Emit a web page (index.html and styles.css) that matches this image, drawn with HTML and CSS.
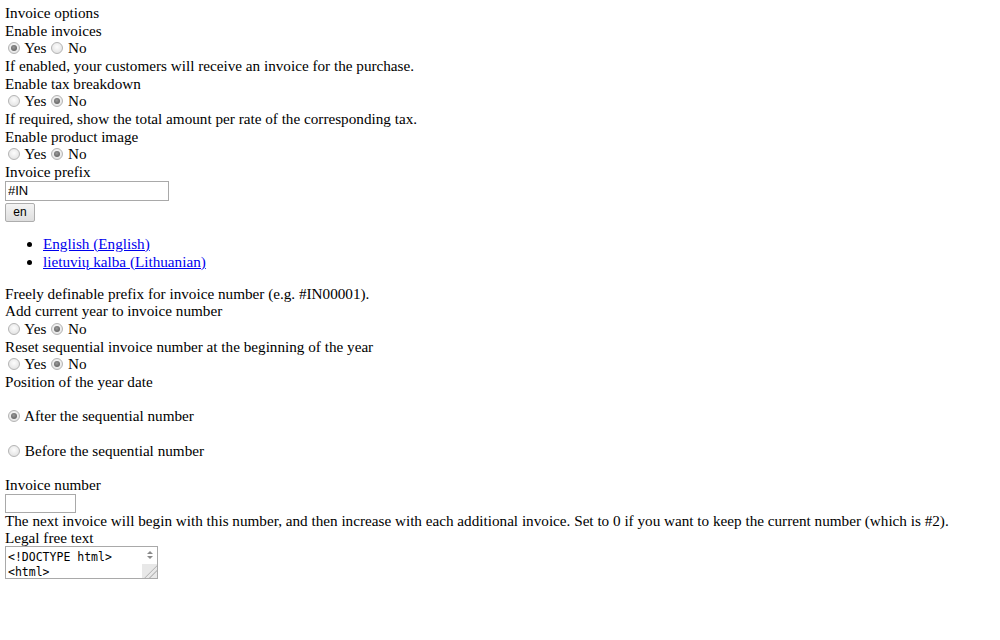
FILE: index.html
```html
<!DOCTYPE html>
<html lang="en">
<head>
    <meta charset="UTF-8">
    <title>Invoice options</title>
    <link rel="stylesheet" href="styles.css">
</head>
<body>
    <div class="settings">
        <div class="line">Invoice options</div>

        <div class="line">Enable invoices</div>
        <div class="choice">
            <label><input type="radio" name="invoices" checked> Yes</label>
            <label><input type="radio" name="invoices"> No</label>
        </div>
        <div class="line">If enabled, your customers will receive an invoice for the purchase.</div>

        <div class="line">Enable tax breakdown</div>
        <div class="choice">
            <label><input type="radio" name="tax"> Yes</label>
            <label><input type="radio" name="tax" checked> No</label>
        </div>
        <div class="line">If required, show the total amount per rate of the corresponding tax.</div>

        <div class="line">Enable product image</div>
        <div class="choice">
            <label><input type="radio" name="image"> Yes</label>
            <label><input type="radio" name="image" checked> No</label>
        </div>

        <div class="line">Invoice prefix</div>
        <div><input class="text-input prefix" type="text" value="#IN"></div>
        <div><button class="lang-btn" type="button">en</button></div>
        <ul class="lang-list">
            <li><a href="#">English (English)</a></li>
            <li><a href="#">lietuvių kalba (Lithuanian)</a></li>
        </ul>
        <div class="line">Freely definable prefix for invoice number (e.g. #IN00001).</div>

        <div class="line">Add current year to invoice number</div>
        <div class="choice">
            <label><input type="radio" name="year"> Yes</label>
            <label><input type="radio" name="year" checked> No</label>
        </div>

        <div class="line">Reset sequential invoice number at the beginning of the year</div>
        <div class="choice">
            <label><input type="radio" name="reset"> Yes</label>
            <label><input type="radio" name="reset" checked> No</label>
        </div>

        <div class="line">Position of the year date</div>
        <p class="choice option"><label><input type="radio" name="position" checked> After the sequential number</label></p>
        <p class="choice option"><label><input type="radio" name="position"> Before the sequential number</label></p>

        <div class="line">Invoice number</div>
        <div><input class="text-input number" type="text"></div>
        <div class="line note">The next invoice will begin with this number, and then increase with each additional invoice. Set to 0 if you want to keep the current number (which is #2).</div>

        <div class="line">Legal free text</div>
        <div class="legal">
            <textarea class="legal-text">&lt;!DOCTYPE html&gt;
&lt;html&gt;</textarea>
            <div class="scroll">
                <span class="arrow up"></span>
                <span class="arrow down"></span>
                <span class="grip"></span>
            </div>
        </div>
    </div>
</body>
</html>
```

FILE: styles.css
```css
body {
    margin: 4px 5px;
    background: #ffffff;
    color: #000000;
    font-family: "Liberation Serif", "Times New Roman", serif;
    font-size: 15.2px;
}
.line {
    line-height: 17.5px;
    white-space: nowrap;
}
.note {
    line-height: 16px;
}
.choice {
    line-height: 18px;
    padding-left: 3px;
}
.choice label {
    margin-right: 1px;
}
.option {
    margin: 16.5px 0;
}
input[type="radio"] {
    appearance: none;
    -webkit-appearance: none;
    width: 12px;
    height: 12px;
    margin: 0 1px 0 0;
    border: 1px solid #b4b4b4;
    border-radius: 50%;
    background: radial-gradient(circle at 50% 40%, #fdfdfd 0%, #e6e6e6 70%, #d8d8d8 100%);
    vertical-align: -1px;
    position: relative;
}
input[type="radio"]:checked::after {
    content: "";
    position: absolute;
    left: 2px;
    top: 2px;
    width: 6px;
    height: 6px;
    border-radius: 50%;
    background: radial-gradient(circle at 45% 40%, #9a9a9a 0%, #6e6e6e 60%, #5a5a5a 100%);
}
.text-input {
    display: block;
    box-sizing: border-box;
    height: 20px;
    margin: 0;
    padding: 0 2px;
    border: 1px solid #a9a9a9;
    font-family: "Liberation Sans", Arial, sans-serif;
    font-size: 13px;
    color: #000000;
}
.prefix {
    width: 164px;
}
.number {
    width: 71px;
    height: 19px;
}
.lang-btn {
    box-sizing: border-box;
    width: 30px;
    height: 19px;
    margin: 2px 0 0 0;
    padding: 0;
    border: 1px solid #adadad;
    border-radius: 2px;
    background: linear-gradient(#f4f4f4, #dedede);
    font-family: "Liberation Sans", Arial, sans-serif;
    font-size: 12px;
    color: #000000;
}
.lang-list {
    margin: 13px 0 14px 0;
    padding-left: 38px;
    line-height: 18px;
}
.lang-list a {
    color: #0000ee;
}
.legal {
    display: flex;
    width: 153px;
    height: 33px;
    box-sizing: border-box;
    border: 1px solid #a9a9a9;
}
.legal-text {
    flex: 1;
    margin: 0;
    padding: 3px 2px 0 2px;
    border: none;
    resize: none;
    overflow: hidden;
    font-family: "DejaVu Sans Mono", "Liberation Mono", monospace;
    font-size: 11.5px;
    line-height: 15px;
    color: #000000;
}
.scroll {
    width: 15px;
    display: flex;
    flex-direction: column;
    align-items: center;
    background: #ffffff;
}
.arrow {
    width: 0;
    height: 0;
    border-left: 3px solid transparent;
    border-right: 3px solid transparent;
}
.arrow.up {
    margin-top: 4px;
    border-bottom: 3px solid #8a8a8a;
}
.arrow.down {
    margin-top: 2px;
    border-top: 3px solid #8a8a8a;
}
.grip {
    margin-top: auto;
    width: 15px;
    height: 14px;
    background: linear-gradient(135deg, #e8e8e8 0%, #e8e8e8 55%, #9a9a9a 56%, #e8e8e8 62%, #e8e8e8 72%, #9a9a9a 73%, #e8e8e8 79%);
}
```
